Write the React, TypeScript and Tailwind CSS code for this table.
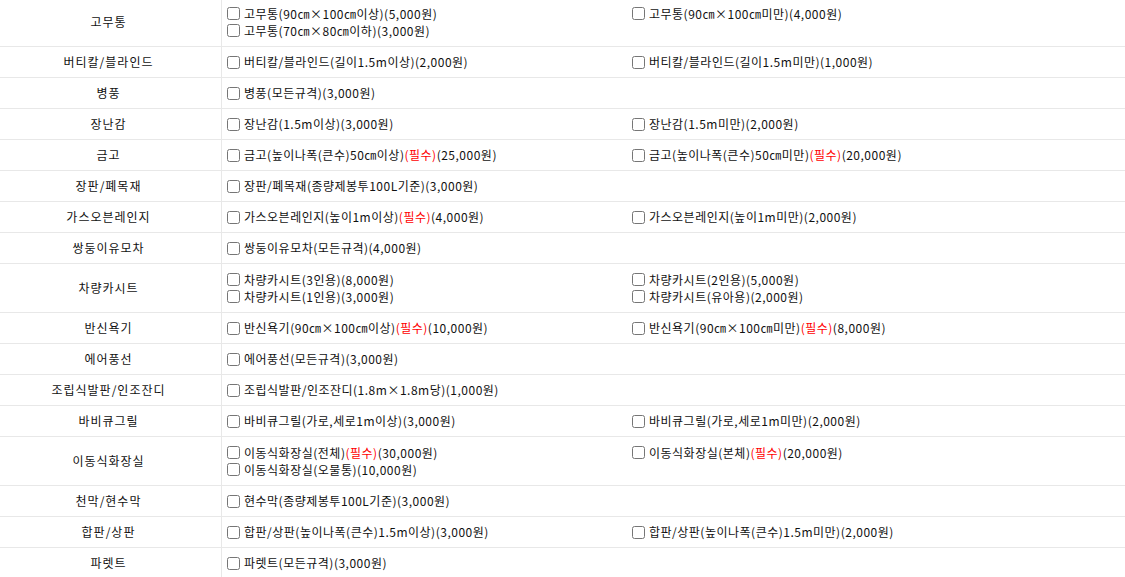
import React from 'react';

type Row = { label: string; items: string[] };

const rows: Row[] = [
    { label: '고무통', items: ['고무통(90㎝×100㎝이상)(5,000원)', '고무통(90㎝×100㎝미만)(4,000원)', '고무통(70㎝×80㎝이하)(3,000원)'] },
    { label: '버티칼/블라인드', items: ['버티칼/블라인드(길이1.5m이상)(2,000원)', '버티칼/블라인드(길이1.5m미만)(1,000원)'] },
    { label: '병풍', items: ['병풍(모든규격)(3,000원)'] },
    { label: '장난감', items: ['장난감(1.5m이상)(3,000원)', '장난감(1.5m미만)(2,000원)'] },
    { label: '금고', items: ['금고(높이나폭(큰수)50㎝이상)(필수)(25,000원)', '금고(높이나폭(큰수)50㎝미만)(필수)(20,000원)'] },
    { label: '장판/폐목재', items: ['장판/폐목재(종량제봉투100L기준)(3,000원)'] },
    { label: '가스오븐레인지', items: ['가스오븐레인지(높이1m이상)(필수)(4,000원)', '가스오븐레인지(높이1m미만)(2,000원)'] },
    { label: '쌍둥이유모차', items: ['쌍둥이유모차(모든규격)(4,000원)'] },
    { label: '차량카시트', items: ['차량카시트(3인용)(8,000원)', '차량카시트(2인용)(5,000원)', '차량카시트(1인용)(3,000원)', '차량카시트(유아용)(2,000원)'] },
    { label: '반신욕기', items: ['반신욕기(90㎝×100㎝이상)(필수)(10,000원)', '반신욕기(90㎝×100㎝미만)(필수)(8,000원)'] },
    { label: '에어풍선', items: ['에어풍선(모든규격)(3,000원)'] },
    { label: '조립식발판/인조잔디', items: ['조립식발판/인조잔디(1.8m×1.8m당)(1,000원)'] },
    { label: '바비큐그릴', items: ['바비큐그릴(가로,세로1m이상)(3,000원)', '바비큐그릴(가로,세로1m미만)(2,000원)'] },
    { label: '이동식화장실', items: ['이동식화장실(전체)(필수)(30,000원)', '이동식화장실(본체)(필수)(20,000원)', '이동식화장실(오물통)(10,000원)'] },
    { label: '천막/현수막', items: ['현수막(종량제봉투100L기준)(3,000원)'] },
    { label: '합판/상판', items: ['합판/상판(높이나폭(큰수)1.5m이상)(3,000원)', '합판/상판(높이나폭(큰수)1.5m미만)(2,000원)'] },
    { label: '파렛트', items: ['파렛트(모든규격)(3,000원)'] },
];

const ItemText = ({ text }: { text: string }) => {
    const parts = text.split('(필수)');
    if (parts.length === 1) return <span>{text}</span>;
    return (
        <span>
            {parts[0]}
            <span className="text-[#ff0000]">(필수)</span>
            {parts[1]}
        </span>
    );
};

export default function App() {
    return (
        <div
            className="w-[1125px] h-[577px] overflow-hidden bg-white text-[12px] text-[#111] tracking-[0.5px]"
            style={{ fontFamily: '"Noto Sans CJK KR", "Noto Sans", sans-serif' }}
        >
            <div className="-mt-[2px]">
                {rows.map((row) => {
                    const twoLines = row.items.length > 2;
                    return (
                        <div
                            key={row.label}
                            className={`flex border-b border-[#e8e8e8] ${twoLines ? 'h-[49px]' : 'h-[31px]'}`}
                        >
                            <div className="w-[222px] shrink-0 border-r border-[#e8e8e8] flex items-center justify-center pr-[4px] tracking-[1px]">
                                {row.label}
                            </div>
                            <div className="flex-1 flex flex-wrap content-center">
                                {row.items.map((item) => (
                                    <label key={item} className="w-[405px] h-[17px] flex items-center">
                                        <input type="checkbox" className="m-0 ml-[5px] mr-[4px] w-[13px] h-[13px]" />
                                        <ItemText text={item} />
                                    </label>
                                ))}
                            </div>
                        </div>
                    );
                })}
            </div>
        </div>
    );
}
